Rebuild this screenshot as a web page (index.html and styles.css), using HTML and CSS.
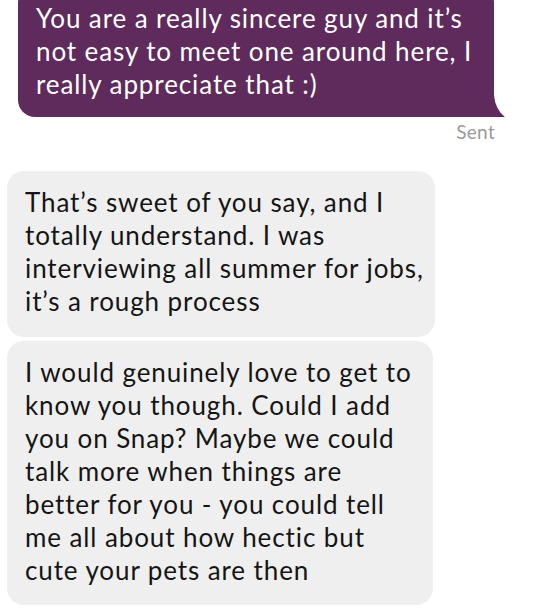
FILE: index.html
```html
<!DOCTYPE html>
<html>
<head>
<meta charset="utf-8">
<link rel="stylesheet" href="styles.css">
</head>
<body>
<div class="thread">
  <div class="row sent-row">
    <div class="bubble out">
      You are a really sincere guy and it’s<br>not easy to meet one around here, I<br>really appreciate that :)
      <svg class="tail" width="16" height="22" viewBox="0 0 16 22"><path d="M0 0 L3 0 Q4 14 14 22 L0 22 Z" fill="#5e2b5c"/></svg>
    </div>
  </div>
  <div class="status">Sent</div>
  <div class="bubble in first">
    That’s sweet of you say, and I<br>totally understand. I was<br>interviewing all summer for jobs,<br>it’s a rough process
  </div>
  <div class="bubble in second">
    I would genuinely love to get to<br>know you though. Could I add<br>you on Snap? Maybe we could<br>talk more when things are<br>better for you - you could tell<br>me all about how hectic but<br>cute your pets are then
  </div>
</div>
</body>
</html>
```
FILE: styles.css
```css
html, body {
  margin: 0;
  padding: 0;
  background: #ffffff;
}
body {
  width: 540px;
  height: 610px;
  overflow: hidden;
  font-family: Lato, "Open Sans", sans-serif;
}
.thread {
  display: flex;
  flex-direction: column;
  margin-top: -14px;
}
.row {
  display: flex;
}
.bubble {
  position: relative;
  font-size: 26px;
  line-height: 33px;
  letter-spacing: 0.9px;
  border-radius: 17px;
  box-sizing: border-box;
  white-space: nowrap;
}
.out {
  margin-left: 18px;
  width: 476px;
  background: #5e2b5c;
  color: #ffffff;
  padding: 16px 18px 16px 18px;
  border-bottom-right-radius: 0;
}
.tail {
  position: absolute;
  right: -13px;
  bottom: 0;
  display: block;
}
.status {
  align-self: flex-end;
  margin-right: 45px;
  margin-top: 4px;
  font-size: 19px;
  line-height: 22px;
  letter-spacing: 0.3px;
  color: #9a9a9a;
}
.in {
  margin-left: 7px;
  background: #efefef;
  color: #151515;
  padding: 15px 18px 19px 18px;
}
.first {
  margin-top: 28px;
  width: 428px;
}
.second {
  margin-top: 4px;
  width: 426px;
  padding-bottom: 18px;
}
```
